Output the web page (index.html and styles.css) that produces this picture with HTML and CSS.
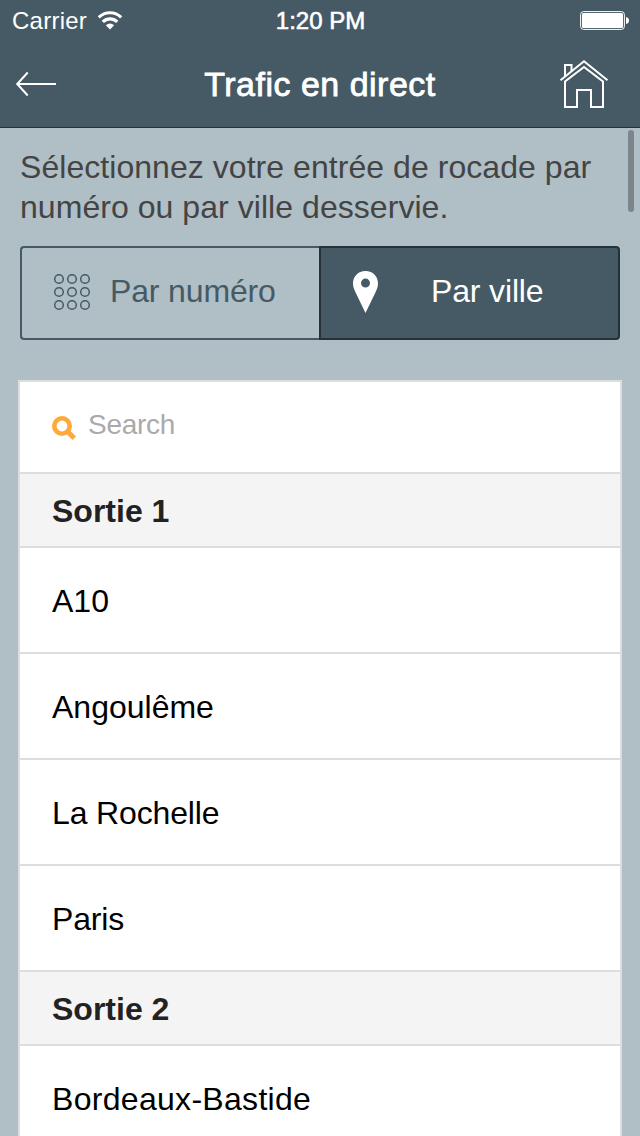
FILE: index.html
```html
<!DOCTYPE html>
<html lang="fr">
<head>
<meta charset="utf-8">
<title>Trafic en direct</title>
<link rel="stylesheet" href="styles.css">
</head>
<body>
<div class="screen">
  <header class="top">
    <div class="status">
      <div class="network">
        <span class="carrier">Carrier</span>
        <svg class="wifi" width="26" height="20" viewBox="0 0 26 20">
          <g fill="none" stroke="#fff" stroke-width="3.2">
            <path d="M1.8 7.4A15.8 15.8 0 0 1 24.2 7.4"/>
            <path d="M5.8 11.9A10.2 10.2 0 0 1 20.2 11.9"/>
          </g>
          <path fill="#fff" d="M13 19.4L8.8 15.2Q13 11.6 17.2 15.2Z"/>
        </svg>
      </div>
      <span class="time">1:20 PM</span>
      <svg class="battery" width="49" height="20" viewBox="0 0 49 20">
        <rect x=".6" y=".6" width="43.8" height="17.8" rx="3" fill="none" stroke="#fff" stroke-width="1"/>
        <rect x="2" y="2" width="41" height="15" rx="1.5" fill="#fff"/>
        <path fill="#fff" d="M46 6Q49 6.5 49 9.5T46 13Z"/>
      </svg>
    </div>
    <nav class="nav">
      <svg class="back" width="42" height="26" viewBox="0 0 42 26">
        <path d="M41 13H2.2M12.7 1.5L2.2 13L12.7 24.5" fill="none" stroke="#fff" stroke-width="2"/>
      </svg>
      <h1 class="title">Trafic en direct</h1>
      <svg class="home" width="50" height="50" viewBox="0 0 50 50">
        <g fill="none" stroke="#fff" stroke-width="2">
          <path d="M1.5 21.2L25 2.2L48.5 21.2"/>
          <path d="M6 22.5V48H18V31H32V48H44V22.5L25 8Z"/>
          <path d="M6 17V6H12.5V12"/>
        </g>
      </svg>
    </nav>
  </header>
  <main class="content">
    <p class="intro">Sélectionnez votre entrée de rocade par numéro ou par ville desservie.</p>
    <div class="tabs">
      <div class="tab tab-number">
        <svg width="38" height="38" viewBox="0 0 38 38">
          <g fill="none" stroke="#455a64" stroke-width="1.5">
            <circle cx="6" cy="6" r="4.3"/><circle cx="19" cy="6" r="4.3"/><circle cx="32" cy="6" r="4.3"/>
            <circle cx="6" cy="19" r="4.3"/><circle cx="19" cy="19" r="4.3"/><circle cx="32" cy="19" r="4.3"/>
            <circle cx="6" cy="32" r="4.3"/><circle cx="19" cy="32" r="4.3"/><circle cx="32" cy="32" r="4.3"/>
          </g>
        </svg>
        <span class="label">Par numéro</span>
      </div>
      <div class="tab tab-city">
        <svg width="26" height="42" viewBox="0 0 26 42">
          <path fill="#fff" fill-rule="evenodd" d="M13.5 0C6 0 1 5.5 1 12.5C1 15.5 2 18 3.1 20.5L13.5 42L23.9 20.5C25 18 26 15.5 26 12.5C26 5.5 21 0 13.5 0ZM13.5 7.6A4.5 4.5 0 1 1 13.5 16.6A4.5 4.5 0 1 1 13.5 7.6Z"/>
        </svg>
        <span class="label">Par ville</span>
      </div>
    </div>
    <section class="card">
      <div class="search">
        <svg width="25" height="25" viewBox="0 0 25 25">
          <circle cx="10" cy="10" r="7.7" fill="none" stroke="#ffa93a" stroke-width="4.6"/>
          <path d="M15 15L22.3 22.3" stroke="#ffa93a" stroke-width="5"/>
        </svg>
        <span class="placeholder">Search</span>
      </div>
      <h2 class="group">Sortie 1</h2>
      <div class="row">A10</div>
      <div class="row">Angoulême</div>
      <div class="row tight">La Rochelle</div>
      <div class="row tight">Paris</div>
      <h2 class="group">Sortie 2</h2>
      <div class="row wide">Bordeaux-Bastide</div>
    </section>
  </main>
  <div class="scrollbar"></div>
</div>
</body>
</html>
```
FILE: styles.css
```css
* { box-sizing: border-box; }
body {
  margin: 0;
  font-family: "Liberation Sans", Arial, sans-serif;
  font-size: 32px;
  overflow: hidden;
}
svg { display: block; flex: none; }
h1, h2, p { margin: 0; }
.screen {
  position: relative;
  width: 640px;
  height: 1136px;
  overflow: hidden;
  background: #b0bec5;
}
.top {
  height: 128px;
  background: #455a64;
  border-bottom: 1px solid #263238;
  color: #fff;
}
.status {
  display: grid;
  grid-template-columns: 1fr auto 1fr;
  height: 40px;
  padding: 0 11px 0 12px;
  align-items: center;
  font-size: 24px;
  line-height: 38px;
}
.network { display: flex; align-items: center; gap: 10px; }
.carrier { padding-top: 2px; letter-spacing: .25px; }
.time { padding-top: 2px; -webkit-text-stroke: .6px #fff; }
.battery { justify-self: end; margin-top: 1px; }
.nav {
  display: flex;
  justify-content: space-between;
  align-items: center;
  height: 88px;
  padding: 0 31px 0 15px;
}
.title {
  margin-left: 24px;
  font-size: 34px;
  font-weight: 400;
  letter-spacing: .5px;
  -webkit-text-stroke: .8px #fff;
}
.home { margin-top: -1px; }
.content { padding: 19px 18px 0; }
.intro {
  padding: 0 2px;
  line-height: 40px;
  letter-spacing: .05px;
  color: #444;
}
.tabs {
  display: grid;
  grid-template-columns: 299px 301px;
  height: 94px;
  margin: 19px 2px 40px;
}
.tab {
  display: flex;
  align-items: center;
  padding-bottom: 2px;
  border: 2px solid #455a64;
}
.label { margin-top: -2px; letter-spacing: -.15px; }
.tab-number {
  padding-left: 31px;
  gap: 19px;
  border-right: 0;
  border-radius: 4px 0 0 4px;
  color: #455a64;
}
.tab-city {
  padding-left: 31px;
  gap: 53px;
  background: #455a64;
  border-color: #263238;
  border-radius: 0 4px 4px 0;
  color: #fff;
}
.card {
  height: 900px;
  background: #fff;
  border: 2px solid #ddd;
}
.search {
  display: flex;
  align-items: center;
  gap: 11px;
  height: 92px;
  padding-left: 32px;
  border-bottom: 2px solid #ddd;
  font-size: 28px;
  color: #aaa;
}
.search svg { margin-top: 2px; }
.placeholder { margin-top: -4px; letter-spacing: -.3px; }
.group {
  height: 74px;
  padding-left: 32px;
  background: #f4f4f4;
  border-bottom: 2px solid #ddd;
  font-size: 32px;
  line-height: 74px;
  color: #222;
}
.row {
  height: 106px;
  padding-left: 32px;
  border-bottom: 2px solid #ddd;
  line-height: 106px;
  color: #000;
}
.tight { letter-spacing: -.15px; }
.wide { letter-spacing: .3px; }
.scrollbar {
  position: absolute;
  top: 130px;
  right: 6px;
  width: 6px;
  height: 82px;
  border-radius: 3px;
  background: #7b858a;
}
```
